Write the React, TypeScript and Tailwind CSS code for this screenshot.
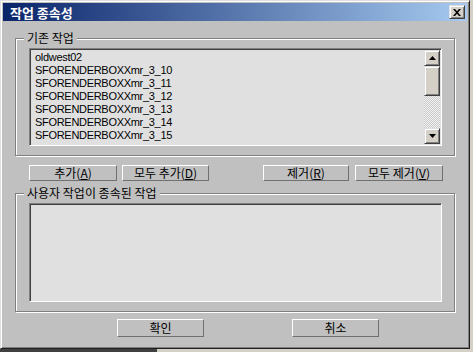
import React from 'react';

const items = [
  'oldwest02',
  'SFORENDERBOXXmr_3_10',
  'SFORENDERBOXXmr_3_11',
  'SFORENDERBOXXmr_3_12',
  'SFORENDERBOXXmr_3_13',
  'SFORENDERBOXXmr_3_14',
  'SFORENDERBOXXmr_3_15',
];

const korean = "font-['Noto_Sans_CJK_KR','Noto_Sans',sans-serif]";

function Button({ children, width, tall = false }: { children: React.ReactNode; width: string; tall?: boolean }) {
  return (
    <div
      className={`flex items-center justify-center ${tall ? 'h-[18px]' : 'h-[16px]'} ${width} border border-t-white border-l-white border-r-[#707070] border-b-[#707070] text-[12px] leading-none text-black`}
    >
      {children}
    </div>
  );
}

function Raised({ className = '', children }: { className?: string; children?: React.ReactNode }) {
  return (
    <div
      className={`flex items-center justify-center bg-[#d4d0c8] border border-t-[#dfdfdf] border-l-[#dfdfdf] border-r-[#404040] border-b-[#404040] shadow-[inset_1px_1px_0_#fff,inset_-1px_-1px_0_#808080] ${className}`}
    >
      {children}
    </div>
  );
}

function Arrow({ down = false }: { down?: boolean }) {
  return (
    <svg width="7" height="4" viewBox="0 0 7 4">
      {down ? <polygon points="0,0 7,0 3.5,4" fill="#000" /> : <polygon points="0,4 7,4 3.5,0" fill="#000" />}
    </svg>
  );
}

function ListBox({ rows, scroll, height }: { rows: string[]; scroll?: boolean; height: string }) {
  return (
    <div
      className={`flex w-[413px] ${height} p-[1px] border border-t-[#808080] border-l-[#808080] border-b-white border-r-white shadow-[inset_1px_1px_0_#404040] bg-[#e0e0e0]`}
    >
      <div className="flex-1 pl-[4px] pt-[1px] font-['Liberation_Sans',Arial,sans-serif] text-[11px] leading-[13px] text-black tracking-[-0.3px]">
        {rows.map((r) => (
          <div key={r}>{r}</div>
        ))}
      </div>
      {scroll && (
        <div className="flex flex-col w-[16px]">
          <Raised className="h-[16px]">
            <Arrow />
          </Raised>
          <Raised className="h-[30px]" />
          <div className="flex-1 bg-[repeating-conic-gradient(#c8c8c8_0_25%,#f4f4f4_0_50%)] bg-[length:2px_2px]" />
          <Raised className="h-[16px]">
            <Arrow down />
          </Raised>
        </div>
      )}
    </div>
  );
}

function GroupBox({ label, children, height }: { label: string; children: React.ReactNode; height: string }) {
  return (
    <div
      className={`relative w-[440px] ${height} pt-[9px] pl-[13px] border border-[#808080] shadow-[1px_1px_0_#fff,inset_1px_1px_0_#fff]`}
    >
      <span className="absolute left-[8px] top-[-9px] px-[3px] bg-[#c0c0c0] text-[12px] leading-[16px] text-black">
        {label}
      </span>
      {children}
    </div>
  );
}

export default function App() {
  return (
    <div className={`w-[473px] h-[352px] bg-[#c0c0c0] flex flex-col ${korean}`}>
      <div className="flex">
        <div className="w-[470px] h-[349px] bg-[#c0c0c0] border border-t-[#dfdfdf] border-l-[#dfdfdf] border-r-[#202020] border-b-[#202020] shadow-[inset_1px_1px_0_#fff,inset_-1px_-1px_0_#808080] p-[2px] flex flex-col">
          <div className="flex items-center justify-between h-[18px] pl-[7px] pr-[2px] bg-[linear-gradient(90deg,#0a246a,#a6caf0)]">
            <span className="text-white font-bold text-[13px] leading-none">작업 종속성</span>
            <Raised className="w-[16px] h-[14px]">
              <svg width="8" height="7" viewBox="0 0 8 7">
                <path d="M0 0h2l2 2.2L6 0h2L5 3.5 8 7H6L4 4.8 2 7H0l3-3.5z" fill="#000" />
              </svg>
            </Raised>
          </div>

          <div className="flex flex-col pl-[12px] pt-[17px]">
            <GroupBox label="기존 작업" height="h-[118px]">
              <ListBox rows={items} scroll height="h-[98px]" />
            </GroupBox>

            <div className="flex mt-[9px] ml-[14px]">
              <Button width="w-[88px]">
                추가(<u>A</u>)
              </Button>
              <div className="ml-[5px]">
                <Button width="w-[87px]">
                  모두 추가(<u>D</u>)
                </Button>
              </div>
              <div className="ml-[54px]">
                <Button width="w-[86px]">
                  제거(<u>R</u>)
                </Button>
              </div>
              <div className="ml-[6px]">
                <Button width="w-[88px]">
                  모두 제거(<u>V</u>)
                </Button>
              </div>
            </div>

            <div className="mt-[12px]">
              <GroupBox label="사용자 작업이 종속된 작업" height="h-[119px]">
                <ListBox rows={[]} height="h-[99px]" />
              </GroupBox>
            </div>

            <div className="flex mt-[7px] ml-[102px]">
              <Button width="w-[87px]" tall>
                확인
              </Button>
              <div className="ml-[88px]">
                <Button width="w-[87px]" tall>
                  취소
                </Button>
              </div>
            </div>
          </div>
        </div>
        <div className="flex-1 bg-[#d4d0c8]" />
      </div>
      <div className="flex h-[3px]">
        <div className="w-[157px] bg-[#404040]" />
        <div className="flex-1 bg-[#d4d0c8]" />
      </div>
    </div>
  );
}
